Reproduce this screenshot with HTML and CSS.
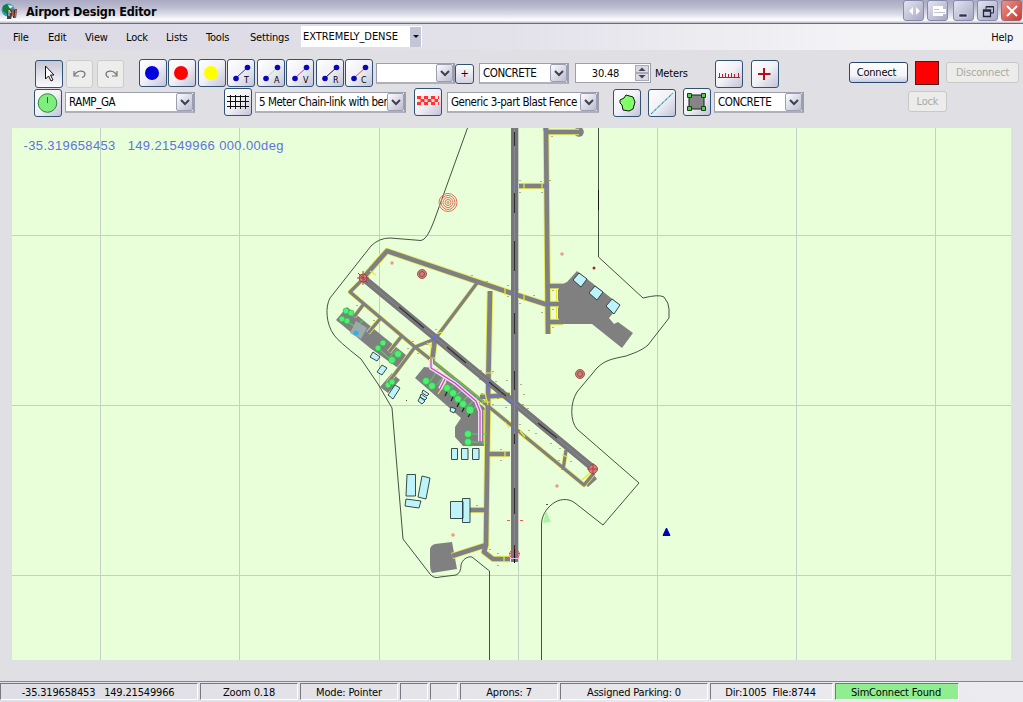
FILE: index.html
```
<!DOCTYPE html>
<html lang="en">
<head>
<meta charset="utf-8">
<title>Airport Design Editor</title>
<link rel="stylesheet" href="styles.css">
</head>
<body>
<div class="window">
<header class="titlebar">
  <svg class="app-icon" width="18" height="20" viewBox="0 0 18 20"><circle cx="7" cy="8" r="6.5" fill="#2e9bb0"/><path d="M2 4L6 2L9 6L6 12L2 9" fill="#187b32"/><path d="M7 3l5 1-3 3z" fill="#e5efdf"/><path d="M6 17V10L9 6L12 10L10 17Z" fill="#444"/><path d="M8 14V8L10 11" stroke="#d8d8d8" fill="none"/><path d="M11 8L16 7L15 16L12 16Z" fill="#333"/><path d="M12 8V14M15 8L14 16" stroke="#f15a38" stroke-width="1.300"/></svg>
  <h1>Airport Design Editor</h1>
  <div class="captions">
    <button class="cap"><svg width="18" height="18"><path d="M8 5L4 9L8 13ZM11 5L15 9L11 13Z" fill="#fff"/></svg></button>
    <button class="cap dock"><svg width="18" height="18"><path d="M4 4H14V7H17V12H14V14H4Z" fill="#fff"/><path d="M5 7.500H10M5 10.500H16" stroke="#c3c4dc"/></svg></button>
    <button class="cap min"><svg width="18" height="18"><rect x="4" y="12" width="8" height="3" fill="#30325a" stroke="#fff" stroke-width=".5"/></svg></button>
    <button class="cap"><svg width="18" height="18" fill="none" stroke="#262842"><path d="M7 7V4.500H14.500V11H12M7 5H14.500"/><path d="M4.500 8H11.500V14.500H4.500ZM4.500 9H11" stroke-width="1.300"/></svg></button>
    <button class="cap close"><svg width="18" height="18"><path d="M4 4L14 14M14 4L4 14" stroke="#fff" stroke-width="2"/></svg></button>
  </div>
</header>
<nav class="menu">
  <span class="m-file">File</span><span class="m-edit">Edit</span><span class="m-view">View</span><span class="m-lock">Lock</span><span class="m-lists">Lists</span><span class="m-tools">Tools</span><span class="m-settings">Settings</span>
  <div class="density"><span>EXTREMELY_DENSE</span><i></i></div>
  <span class="m-help">Help</span>
</nav>
<section class="tools">
  <div class="row">
    <div class="group history">
      <button class="tb pressed"><svg width="26" height="26"><path d="M9.500 5V18L12.500 15L15 20L17 19L14.500 14H18Z" fill="#fff" stroke="#111"/></svg></button>
      <button class="tb off"><svg width="26" height="26" fill="none" stroke="#777"><path d="M7 10V15H12M7.500 14C10 9 17 9 18 12.500C18 15 17 16 15 16.500" stroke-width="1.200"/></svg></button>
      <button class="tb off"><svg width="26" height="26" fill="none" stroke="#777"><path d="M19 10V15H14M18.500 14C16 9 9 9 8 12.500C8 15 9 16 11 16.500" stroke-width="1.200"/></svg></button>
    </div>
    <div class="group draw">
      <button class="tb"><svg width="26" height="26"><circle cx="12" cy="13" r="7" fill="#00d"/></svg></button>
      <button class="tb"><svg width="26" height="26"><circle cx="12" cy="13" r="7" fill="#f00"/></svg></button>
      <button class="tb"><svg width="26" height="26"><circle cx="12" cy="13" r="7" fill="#ff0"/></svg></button>
      <button class="tb"><svg width="26" height="26"><path d="M8 18L20 7" stroke="#2530bd"/><g fill="#0805bd"><circle cx="8" cy="18.500" r="2.800"/><circle cx="19.500" cy="7.500" r="2.800"/></g><text x="16" y="23">T</text></svg></button>
      <button class="tb"><svg width="26" height="26"><path d="M8 18L20 7" stroke="#9ce39c"/><g fill="#0805bd"><circle cx="8" cy="18.500" r="2.800"/><circle cx="19.500" cy="7.500" r="2.800"/></g><text x="16" y="23">A</text></svg></button>
      <button class="tb"><svg width="26" height="26"><path d="M8 18L20 7" stroke="#c03dc0"/><g fill="#0805bd"><circle cx="8" cy="18.500" r="2.800"/><circle cx="19.500" cy="7.500" r="2.800"/></g><text x="16" y="23">V</text></svg></button>
      <button class="tb"><svg width="26" height="26"><path d="M8 18L20 7" stroke="#111"/><g fill="#0805bd"><circle cx="8" cy="18.500" r="2.800"/><circle cx="19.500" cy="7.500" r="2.800"/></g><text x="16" y="23">R</text></svg></button>
      <button class="tb"><svg width="26" height="26"><path d="M8 18L20 7" stroke="#e04d38"/><g fill="#0805bd"><circle cx="8" cy="18.500" r="2.800"/><circle cx="19.500" cy="7.500" r="2.800"/></g><text x="15" y="23">C</text></svg></button>
    </div>
    <div class="combo name"><span></span><i><svg width="10" height="8"><path d="M1 2L5 6L9 2"/></svg></i></div>
    <button class="add">+</button>
    <div class="combo surface"><span>CONCRETE</span><i><svg width="10" height="8"><path d="M1 2L5 6L9 2"/></svg></i></div>
    <div class="number"><span>30.48</span><div class="spin"><b><svg width="10" height="6"><path d="M1.500 5L5 1.500L8.500 5Z"/></svg></b><b><svg width="10" height="6"><path d="M1.500 1L5 4.500L8.500 1Z"/></svg></b></div></div>
    <span class="unit">Meters</span>
    <button class="tb ruler"><svg width="26" height="26"><path d="M2 16.500H24M3.500 16V12M6.500 16V13M9.500 16V12M12.500 16V13M15.500 16V12M18.500 16V13M22.500 16V12" stroke="#b31f2a"/></svg></button>
    <button class="tb cross"><svg width="26" height="26"><path d="M6 13H18.500M12 7V19" stroke="#b20f18" stroke-width="2"/></svg></button>
    <button class="push connect">Connect</button>
    <div class="lamp"></div>
    <button class="push off disconnect">Disconnect</button>
  </div>
  <div class="row second">
    <button class="tb ramp"><svg width="26" height="26"><circle cx="12.500" cy="13" r="9.300" fill="#7fee7f" stroke="#278a37"/><path d="M12.500 7V13" stroke="#137923"/></svg></button>
    <div class="combo ramp-type"><span>RAMP_GA</span><i><svg width="10" height="8"><path d="M1 2L5 6L9 2"/></svg></i></div>
    <button class="tb fence"><svg width="26" height="26"><path d="M2 7.500H24M2 12.500H24M2 17.500H24M5.500 6V20M10.500 6V20M15.500 6V20M20.500 6V20" stroke="#111"/></svg></button>
    <div class="combo fence-type"><span>5 Meter Chain-link with ber</span><i><svg width="10" height="8"><path d="M1 2L5 6L9 2"/></svg></i></div>
    <button class="tb blast"><svg width="26" height="26"><rect x="2" y="7" width="22" height="10" fill="#ffdede"/><path d="M2 8.500H24M2 14.500H24" stroke="#f33" stroke-width="3" stroke-dasharray="4 3"/><path d="M5.500 11.500H23" stroke="#f33" stroke-width="3" stroke-dasharray="4 3"/></svg></button>
    <div class="combo blast-type"><span>Generic 3-part Blast Fence</span><i><svg width="10" height="8"><path d="M1 2L5 6L9 2"/></svg></i></div>
    <button class="tb poly"><svg width="26" height="26"><path d="M6 10L10 8L12 5L19 7L21 12L19 19L15 21L9 20L8 15L6 13Z" fill="#80ff69" stroke="#111"/></svg></button>
    <button class="tb line"><svg width="26" height="26"><path d="M2 24L24 3" stroke="#79ced4" stroke-width="1.200"/><path d="M2 24L24 3" stroke="#335d67" stroke-dasharray="2 3" stroke-width=".8"/></svg></button>
    <button class="tb apron"><svg width="26" height="26"><path d="M5 6H20V20H5Z" fill="#858585" stroke="#201c20"/><g fill="#52cf4f" stroke="#173e17"><path d="M3.500 4.500h4v4h-4zM17.500 4.500h4v4h-4zM3.500 17.500h4v4h-4zM17.500 17.500h4v4h-4z"/></g></svg></button>
    <div class="combo apron-type"><span>CONCRETE</span><i><svg width="10" height="8"><path d="M1 2L5 6L9 2"/></svg></i></div>
    <button class="push off lock">Lock</button>
  </div>
</section>
<main class="map">
<svg width="999" height="532" viewBox="12 128 999 532">
  <defs>
    <path id="wide" d="M364 277L387 251L514 294L548 305M546 128L548 334M519 186H546M548 132H579M548 286H563M548 304H563M548 322H563M490 291L488 400L486 545L484 552L493 559H510M488 454H510M487 510H470M486 545L452 556M435 338L432 362M480 397L510 395"/>
    <path id="thin" d="M363 279L350 292L415 347L466 388L584 485L594 473M477 283L435 339L415 347L388 383M363 305L354 317M380 319L368 333M401 337L389 352M566 450L563 470"/>
  </defs>
  <path class="grid" d="M100.500 128V660M239.500 128V660M379.500 128V660M518.500 128V660M657.500 128V660M796.500 128V660M935.500 128V660M12 235.500H1011M12 405.500H1011M12 575.500H1011"/>
  <path class="bounds" d="M467.500 128L434 221Q427 240 421 240.500L390 238Q379 238 371 246L330 298C325 307 326 324 334 335Q338 341 361 359L378 384L392 408L403 539L430 574Q434 579 440 577L456 575Q461 573 461 565C462 560 467 556 472 557L489.500 571V660M598.500 128V257L643 298Q659 294 664 297Q669 303 669 309V318L648 345C641 351 634 353 626 356C612 359 605 360 597 368L577 392C570 403 570 421 577 429L639 483L603 525L575 503C560 492 541 509 541.500 525V660"/>
  <path class="bounds accent" d="M598.500 190V210"/>
  <path class="surface" d="M347 307L336 320L370 348L398 368L406 355ZM392 373L400 380L388 393L380 387ZM424 367L415 378L461 418L455 427V437L463 446H485V408L434 368ZM577 271L567 282L558 286V324H592L622 348L633 333L618 322L614 324L609 318L620 305ZM430 549Q431 545 435 544L452 542L457 569L432 573Q430 570 430 565ZM594 475L597 479L588 487L585 484Z"/>
  <circle class="surface" cx="579" cy="132" r="4.800"/>
  <use href="#wide" class="edge wide-edge"/><use href="#thin" class="edge thin-edge"/>
  <use href="#wide" class="pave wide-pave"/><use href="#thin" class="pave thin-pave"/>
  <path class="surface" d="M559 284H572V324H559Z"/>
  <path class="yellow" d="M524 183V189M542 183V189M430 358h6M485 373h8M482 402h8M485 393l3 12M505 451V457M504 556V562M505 288v7M524 294v7M438 394L446 382M427 343l5 4M436 334l6-2M556.500 290V301M556.500 307V319M484 410V444M520 431l5 6M505 422l4 6M562 455l6 2M582 480L591 472M370 271l6 4"/>
  <path class="runway" d="M514.500 128V562M362 277L594 469"/>
  <path class="runway-line" d="M514.500 128V562M362 277L594 469"/>
  <path class="bars" d="M514.500 132V146M514.500 193V213M514.500 241V271M514.500 313V334M514.500 371V390M514.500 434V444M514.500 488V514M514.500 545V562M399 307L424 328M447 347L466 363M489 382L506 396M538 423L557 438"/>
  <g class="green-line"><path d="M343 319L356 327L363 320M380 350L389 358L397 349M430 382L438 369M437 385L445 374M448 393L454 384M454 397L464 389M460 404L470 394M466 408L477 397M471 412L480 402M468 434H487M468 442H487M434 362L484 402"/></g>
  <path class="pink" d="M431 359V368L455 383L476 401L480 411V441M445 379L440 389"/>
  <path class="pink-center" d="M431 359V368L455 383L476 401L480 411V441M445 379L440 389"/>
  <g class="spots"><circle cx="346" cy="311" r="3"/><circle cx="342" cy="319" r="3"/><circle cx="351" cy="313" r="3"/><circle cx="347" cy="321" r="3"/><circle cx="383" cy="343" r="3"/><circle cx="378" cy="348" r="3"/><circle cx="398" cy="354" r="3.500"/><circle cx="392" cy="360" r="3.500"/><circle cx="388" cy="385" r="3"/><circle cx="392" cy="382" r="3"/><circle cx="426" cy="381" r="3.500"/><circle cx="432" cy="386" r="3.500"/><circle cx="447" cy="388" r="3.500"/><circle cx="453" cy="393" r="3.500"/><circle cx="458" cy="399" r="3.500"/><circle cx="463" cy="404" r="3.500"/><circle cx="470" cy="410" r="4"/><circle cx="468" cy="434" r="3.500"/><circle cx="468" cy="442" r="3.500"/></g>
  <path d="M447 392l-2 4M453 397l-2 4M459 403l-2 4M464 408l-2 4M470 414l-2 3" stroke="#152815" stroke-width="1.200"/>
  <path d="M350 333L356 321L367 328L361 339Z" fill="#9babac"/><circle cx="356" cy="333" r="2.600" fill="#34afe2"/>
  <path class="building" d="M373 352L380 357L377 361L370 357ZM382 365L387 368L382 375L377 372ZM395 385L400 388L393 399L388 395ZM573 280L579 273L587 279L581 287ZM589 293L595 286L603 292L597 300ZM606 306L612 299L620 305L614 314ZM451.500 448.500H457.500V459.500H451.500ZM461.500 448.500H468V459.500H461.500ZM472.500 448.500H479V459.500H472.500ZM407 474.500H415.500V496H406ZM422 476L430 478L426 499L418 497ZM406 499L421 501L419 508L405 506ZM450.500 501.500H463V518.500H450.500ZM462.500 498.500H470V522.500H462.500ZM451 407L456 409L454 413L450 411Z"/>
  <path class="building" d="M423 390L429 394L427 396L422 393ZM421 394L427 398L425 400L420 397ZM420 397L425 401L422 404L418 401Z"/>
  <g class="beacon"><circle cx="448" cy="202.500" r="9"/><circle cx="448" cy="202.500" r="7"/><circle cx="448" cy="202.500" r="5"/><circle cx="448" cy="202.500" r="3"/><circle cx="448" cy="202.500" r="1"/></g>
  <g class="radio"><circle cx="422" cy="274" r="4.500"/><circle cx="422" cy="274" r="2.500"/><circle cx="580" cy="374" r="4.500"/><circle cx="580" cy="374" r="2.500"/><circle cx="363" cy="278" r="4"/><circle cx="593" cy="469" r="4.500"/></g>
  <path d="M357 278H369M363 271V285M587 469H598M593 463V475M358 273L368 283" stroke="#ba3949" stroke-width="1"/>
  <g fill="none" stroke="#ed4b50"><circle cx="514.500" cy="554" r="4.700"/><path d="M509 553.500H520M511 549L519 559"/></g><path d="M514.500 549V563" stroke="#111"/><path d="M510 558.500h9" stroke="#ddc0ee"/>
  <g fill="#ef978a"><circle cx="392" cy="263" r="1.700"/><circle cx="562" cy="254" r="1.700"/><circle cx="557" cy="486" r="1.700"/><circle cx="453" cy="535" r="1.800"/><circle cx="594" cy="268" r="1.500" fill="#93302a"/></g>
  <path d="M507 520.500H510M520 520.500H523" stroke="#f45a5a"/>
  <path d="M543 523L546 511L551 522Z" fill="#a9f4a5"/><path d="M546 504.500h2M406 400.500h1" stroke="#604b40"/>
  <path d="M666.500 528L670 535.500H663Z" fill="#00b" stroke="#0000b0"/>
  <path d="M510 292L520 297M544 128v3M511 186h7M544 186h5M545 304h6M432 337h6M435 334v7M488 396h14M488 380V392M511 430h4M508 400l10 5" stroke="#6270ef"/>
  <path class="dots" d="M507 380v1M521 384v1M503 389v1M524 394v1M498 398v1M506 407v1M523 404v1M528 408v1M520 180v1M541 181v1M520 192v1M542 192v1M550 180v1M552 136v1M518 289v1M520 303v1M534 295v1M542 312v1M474 280v1M484 284v1M472 275v1M487 281v1M508 285v1M508 296v1M561 289v1M553 290v1M553 309v1M553 327v1M436 329v1M427 344v1M445 348v1M408 348v1M413 341v1M418 353v1M482 393v1M493 404v1M502 391v1M501 449v1M501 460v1M520 424v1M529 430v1M531 440v1M536 433v1M560 448v1M572 453v1M559 460v1M571 461v1M481 548v1M490 549v1M498 553v1M498 565v1M477 505v1M374 320v1M357 305v1M481 370v1M493 371v1M480 379v1M496 381v1M551 443v1"/>
  <text class="coords" x="23.500" y="150" textLength="260" xml:space="preserve">-35.319658453   149.21549966 000.00deg</text>
</svg>
</main>
<footer class="status">
  <span class="pos">-35.319658453&nbsp;&nbsp; 149.21549966</span><span class="zoom">Zoom 0.18</span><span class="mode">Mode: Pointer</span><span class="blank"></span><span class="blank"></span><span class="aprons">Aprons: 7</span><span class="parking">Assigned Parking: 0</span><span class="files">Dir:1005&nbsp; File:8744</span><span class="found">SimConnect Found</span>
</footer>
</div>
</body>
</html>
```
FILE: styles.css
```
* { box-sizing: border-box; }
body { margin: 0; background: #e0dfe3; color: #050505; font: 11px "DejaVu Sans Condensed", "DejaVu Sans", sans-serif; letter-spacing: -.18px; overflow: hidden; }
.window { width: 1023px; height: 702px; display: flex; flex-direction: column; white-space: nowrap; }
button { font: inherit; letter-spacing: inherit; color: inherit; padding: 0; margin: 0; }
svg { display: block; }
.titlebar { height: 24px; flex: none; display: flex; align-items: center; border-bottom: 1px solid #6c6b80; background: linear-gradient(#a9a9c3 0, #babace 30%, #e0e0eb 65%, #fff 88%, #b8b8c8 100%); }
.app-icon { margin: 0 7px 0 1px; }
.titlebar h1 { font-size: 12.5px; line-height: 22px; margin: 0; letter-spacing: -.2px; }
.captions { margin: 0 1px 2px auto; display: flex; gap: 3px; }
.cap { width: 21px; height: 21px; border: 1px solid #858aa8; border-radius: 3px; background: linear-gradient(135deg, #e3e3f1, #a7a9c4); display: grid; place-items: center; }
.cap.dock { margin-right: 2px; }
.cap.close { background: linear-gradient(135deg, #e8958b, #c83a35); border-color: #9f666b; }
.menu { height: 26px; flex: none; display: flex; align-items: center; background: linear-gradient(90deg, #dad9e5, #e3e2e9 50%, #f4f4f7 85%); }
.menu > span { flex: none; }
.m-file { width: 35px; margin-left: 13px; }.m-edit { width: 37px; }.m-view { width: 41px; }.m-lock { width: 40px; }.m-lists { width: 40px; }.m-tools { width: 44px; }.m-settings { width: 51px; }
.density { width: 121px; height: 21px; margin-bottom: 1px; background: #fff; display: flex; align-items: center; padding-left: 2px; }
.density span { width: 107px; letter-spacing: -.05px; }
.density i { width: 11px; height: 20px; background: #c5c5d8; display: grid; place-items: center; }
.density i::after { content: ""; border: 3px solid transparent; border-top-color: #111; border-bottom: 0; }
.m-help { margin: 0 10px 0 auto; }
.tools { height: 78px; flex: none; padding-top: 9px; }
.row { height: 29px; display: flex; align-items: center; }
.row > * { flex: none; }
.group { display: flex; }
.tb { width: 28px; height: 28px; flex: none; border: 1px solid #315274; border-radius: 3px; background: linear-gradient(135deg, #fff, #f0f0f6 50%, #c3c3d8); overflow: hidden; }
.tb text { font: 8px "DejaVu Sans", sans-serif; }
.tb.pressed { background: linear-gradient(#c6c6d5, #fafafd); }
.tb.off { border-color: #cbcbc9; background: #ededeb; }
.history { margin-left: 35px; gap: 3px; padding-top: 1px; }.history .off { width: 27px; }.history .off + .off { margin-left: 1px; }
.draw { width: 234px; margin: 0 0 1px 15px; justify-content: space-between; }
.combo { height: 21px; border: 1px solid #9b9fae; border-right: 2px solid #9b9fad; border-bottom: 2px solid #aeb0b9; background: #fff; display: flex; align-items: center; justify-content: space-between; padding-left: 3px; font-size: 11.5px; letter-spacing: -.45px; }
.combo i { width: 17px; height: 18px; border: 1px solid #9c9fb3; border-radius: 2px; background: linear-gradient(135deg, #fcfcff, #bbbcd1); display: grid; place-items: center; }
.combo path { fill: none; stroke: #3d424b; stroke-width: 2; }
.name { width: 79px; margin-left: 3px; }
.add { width: 19px; height: 20px; border: 1px solid #315274; border-radius: 3px; background: linear-gradient(#fff, #d2d2e2); }
.surface.combo { width: 90px; margin-left: 5px; }
.number { width: 76px; height: 20px; margin: 0 0 1px 6px; border: 1px solid #9e9fab; background: #fff; display: flex; align-items: center; }
.number span { width: 59px; text-align: center; }.spin { width: 14px; }
.spin b { display: grid; place-items: center; height: 8px; border: 1px solid #a8a9b8; background: #d9d9e4; }
.spin path { fill: #424654; }
.unit { width: 60px; margin-left: 4px; }
.ruler, .cross { margin-top: 1px; }.cross { margin-left: 8px; }
.push { height: 21px; border: 1px solid #254970; border-radius: 3px; background: linear-gradient(#fff, #f3f3f8 65%, #c9cae0); }
.push.off { color: #aaa9a4; background: #ececea; border-color: #c8c8c5; }
.connect { width: 59px; margin: 0 0 2px 70px; padding-right: 4px; }.lamp { width: 24px; height: 24px; margin: 0 0 1px 7px; background: #f00; border: 1px solid #501818; }
.disconnect { width: 73px; margin: 0 0 3px 7px; }
.ramp { margin-left: 34px; }.ramp-type { width: 130px; margin-left: 3px; }.fence { margin: 0 0 1px 29px; }.fence-type { width: 151px; margin-left: 3px; }
.blast { margin: 0 0 1px 8px; }.blast-type { width: 152px; margin-left: 5px; }.poly { margin-left: 14px; }.line { margin-left: 7px; }.apron { margin: 0 0 1px 7px; }.apron-type { width: 90px; margin-left: 3px; }.lock { width: 39px; margin: 0 0 2px 104px; }
.map { height: 532px; margin: 0 12px; flex: none; background: #e8ffda; }
.grid { fill: none; stroke: #c5d1c5; }
.bounds { fill: none; stroke: #343d31; stroke-width: .9; }.bounds.accent { stroke: #111; }
.map .surface { fill: #808080; }
.edge, .pave { fill: none; stroke-linejoin: round; }
.edge { stroke: #ebed50; }.pave { stroke: #7f7f86; }
.wide-edge { stroke-width: 6.5px; }.wide-pave { stroke-width: 4.7px; }.thin-edge { stroke-width: 4.5px; }.thin-pave { stroke-width: 3.2px; }
.runway { fill: none; stroke: #777779; stroke-width: 7; }.runway-line { fill: none; stroke: #9494a0; stroke-width: .6; }.bars { stroke: #303030; stroke-width: 1.1; }
.yellow { fill: none; stroke: #e8ed25; stroke-width: 1.2; }.green-line { fill: none; stroke: #5ac86b; stroke-width: 1.1; }.spots { fill: #4df16b; stroke: #25a84b; stroke-width: .5; }
.pink { fill: none; stroke: #eddded; stroke-width: 4; }.pink-center { fill: none; stroke: #c93dca; stroke-width: 1.2; }
.building { fill: #bff3fa; stroke: #25393d; stroke-width: .9; }
.beacon { fill: none; stroke: #e66d58; }.radio { fill: #cf8178; stroke: #8d3f3b; stroke-width: .8; }
.dots { stroke: #8b842f; stroke-width: 1.2; }.coords { font: 13px "Liberation Sans", Arial, sans-serif; letter-spacing: 0; fill: #6074dc; }
.status { height: 21px; margin-top: 21px; flex: none; border-top: 1px solid #85858c; display: flex; padding-top: 1px; background: linear-gradient(90deg, #dfdee4, #ececf0); }
.status span { height: 17px; line-height: 17px; flex: none; text-align: center; border: 1px solid #777982; border-right-color: #fff; border-bottom-color: #fff; margin-right: 2px; }
.pos { width: 198px; padding-right: 2px; }.zoom { width: 98px; }.mode { width: 98px; }.blank { width: 28px; }.aprons { width: 98px; }.parking { width: 148px; }.files { width: 123px; padding-right: 2px; }.status .found { width: 124px; padding-right: 2px; background: #90ee90; }
```
